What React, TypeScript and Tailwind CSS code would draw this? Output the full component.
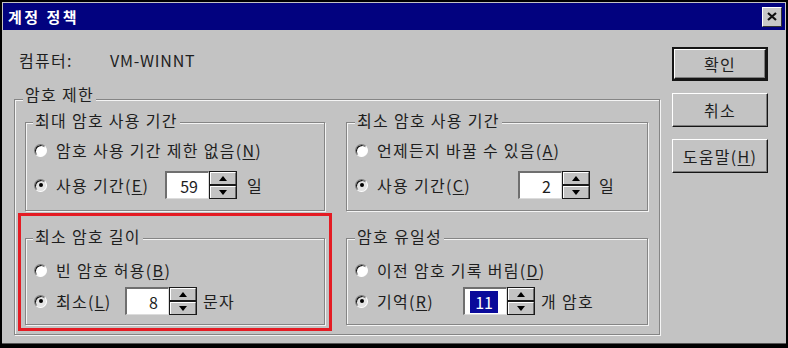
import React from "react";

function Radio({ checked }: { checked?: boolean }) {
  return (
    <div
      className={`relative w-[13px] h-[13px] shrink-0 rounded-full border border-t-[#7a7a7a] border-l-[#7a7a7a] border-r-white border-b-white shadow-[inset_1px_1px_0_#111] ${
        checked ? "bg-[#e4e4e4]" : "bg-white"
      } flex items-center justify-center`}
    >
      {checked && <div className="w-[4px] h-[4px] rounded-full bg-black" />}
    </div>
  );
}

function U({ children }: { children: React.ReactNode }) {
  return <span className="underline underline-offset-2">{children}</span>;
}

function Spinner() {
  return (
    <div className="w-[28px] h-[28px] shrink-0 flex flex-col border border-[#1a1a1a] bg-[#1a1a1a]">
      <div className="flex-1 bg-[#c3c3c3] border-t border-l border-white border-r border-r-[#6a6a6a] flex items-center justify-center mb-[2px]">
        <svg width="8" height="5" viewBox="0 0 8 5">
          <polygon points="4,0 8,5 0,5" fill="#000" />
        </svg>
      </div>
      <div className="flex-1 bg-[#c3c3c3] border-t border-l border-white border-r border-r-[#6a6a6a] flex items-center justify-center">
        <svg width="8" height="5" viewBox="0 0 8 5">
          <polygon points="0,0 8,0 4,5" fill="#000" />
        </svg>
      </div>
    </div>
  );
}

function Edit({ value, selected }: { value: string; selected?: boolean }) {
  return (
    <div className="w-[44px] h-[28px] shrink-0 bg-white border-t-2 border-l-2 border-t-[#6f6f6f] border-l-[#6f6f6f] border-b border-r border-b-[#dcdcdc] border-r-[#dcdcdc] flex items-center justify-end pr-[10px] tracking-normal">
      {selected ? (
        <span className="bg-[#0a0a9a] text-white px-[5px] h-[22px] flex items-center mr-[-2px]">{value}</span>
      ) : (
        <span>{value}</span>
      )}
    </div>
  );
}

function Group({
  label,
  labelClass,
  className,
  children,
}: {
  label: string;
  labelClass: string;
  className?: string;
  children?: React.ReactNode;
}) {
  return (
    <div
      className={`relative border border-[#858585] shadow-[inset_1px_1px_0_#f4f4f4,1px_1px_0_#f4f4f4] ${className ?? ""}`}
    >
      <span className={`absolute bg-[#c3c3c3] px-[2px] leading-[18px] ${labelClass}`}>{label}</span>
      {children}
    </div>
  );
}

function Btn({ children, def }: { children: React.ReactNode; def?: boolean }) {
  const inner = (
    <div className="h-full w-full bg-[#c3c3c3] border-t border-l border-t-white border-l-white border-b border-r border-b-[#151515] border-r-[#151515] shadow-[inset_-1px_-1px_0_#7d7d7d] flex items-center justify-center">
      {children}
    </div>
  );
  if (def) {
    return <div className="h-[34px] w-[96px] border-2 border-[#151515]">{inner}</div>;
  }
  return <div className="h-[34px] w-[96px]">{inner}</div>;
}

export default function App() {
  return (
    <div className="w-[788px] h-[348px] bg-black pt-[2px] px-[2px] pb-[4px] font-['Noto_Sans_CJK_KR','Noto_Sans',sans-serif] text-[16px] leading-none text-[#1e1e1e] tracking-[1.3px]">
      <div className="h-full bg-[#c3c3c3] pt-[1px] px-[1px] flex flex-col border-b border-[#555]">
        {/* Title bar */}
        <div className="h-[27px] shrink-0 bg-[#02027f] flex items-center justify-between pl-[5px] pr-[3px]">
          <span className="text-white font-bold text-[15px] tracking-[2.5px]">계정 정책</span>
          <div className="w-[20px] h-[20px] bg-[#c8c8c8] border-t border-l border-white border-b border-r border-b-[#333] border-r-[#333] flex items-center justify-center">
            <svg width="10" height="9" viewBox="0 0 10 9">
              <path d="M1 1 L9 8 M9 1 L1 8" stroke="#111" strokeWidth="2.2" />
            </svg>
          </div>
        </div>

        {/* Body */}
        <div className="flex flex-1">
          <div className="w-[657px] pl-[11px]">
            <div className="mt-[20px] h-[20px] pl-[5px] flex items-center">
              <span className="w-[91px]">컴퓨터:</span>
              <span className="tracking-[0.8px]">VM-WINNT</span>
            </div>

            <Group
              label="암호 제한"
              labelClass="-top-[15px] left-[8px]"
              className="mt-[29px] w-[646px] h-[236px] pt-[22px] pl-[10px]"
            >
              <div className="grid grid-cols-[300px_302px] grid-rows-[89px_87px] gap-x-[21px] gap-y-[27px]">
                {/* 최대 암호 사용 기간 */}
                <Group label="최대 암호 사용 기간" labelClass="-top-[12px] left-[7px]" className="pt-[16px] pl-[8px]">
                  <div className="flex items-center h-[22px]">
                    <Radio />
                    <span className="ml-[9px]">
                      암호 사용 기간 제한 없음(<U>N</U>)
                    </span>
                  </div>
                  <div className="flex items-center h-[28px] mt-[10px]">
                    <Radio checked />
                    <span className="ml-[9px] w-[109px]">
                      사용 기간(<U>E</U>)
                    </span>
                    <Edit value="59" />
                    <Spinner />
                    <span className="ml-[10px]">일</span>
                  </div>
                </Group>

                {/* 최소 암호 사용 기간 */}
                <Group label="최소 암호 사용 기간" labelClass="-top-[12px] left-[8px]" className="pt-[16px] pl-[8px]">
                  <div className="flex items-center h-[22px]">
                    <Radio />
                    <span className="ml-[9px]">
                      언제든지 바꿀 수 있음(<U>A</U>)
                    </span>
                  </div>
                  <div className="flex items-center h-[28px] mt-[10px]">
                    <Radio checked />
                    <span className="ml-[9px] w-[141px]">
                      사용 기간(<U>C</U>)
                    </span>
                    <Edit value="2" />
                    <Spinner />
                    <span className="ml-[9px]">일</span>
                  </div>
                </Group>

                {/* 최소 암호 길이 (red box) */}
                <div className="relative">
                  <Group label="최소 암호 길이" labelClass="-top-[12px] left-[7px]" className="h-full pt-[20px] pl-[8px]">
                    <div className="flex items-center h-[22px]">
                      <Radio />
                      <span className="ml-[9px]">
                        빈 암호 허용(<U>B</U>)
                      </span>
                    </div>
                    <div className="flex items-center h-[28px] mt-[6px]">
                      <Radio checked />
                      <span className="ml-[9px] w-[69px]">
                        최소(<U>L</U>)
                      </span>
                      <Edit value="8" />
                      <Spinner />
                      <span className="ml-[6px]">문자</span>
                    </div>
                  </Group>
                  <div className="absolute -left-[7px] -right-[7px] -top-[25px] -bottom-[6px] border-[3px] border-[#e41b23] pointer-events-none" />
                </div>

                {/* 암호 유일성 */}
                <Group label="암호 유일성" labelClass="-top-[12px] left-[8px]" className="h-full pt-[20px] pl-[8px]">
                  <div className="flex items-center h-[22px]">
                    <Radio />
                    <span className="ml-[9px]">
                      이전 암호 기록 버림(<U>D</U>)
                    </span>
                  </div>
                  <div className="flex items-center h-[28px] mt-[6px]">
                    <Radio checked />
                    <span className="ml-[9px] w-[86px]">
                      기억(<U>R</U>)
                    </span>
                    <Edit value="11" selected />
                    <Spinner />
                    <span className="ml-[6px]">개 암호</span>
                  </div>
                </Group>
              </div>
            </Group>
          </div>

          {/* Buttons */}
          <div className="ml-[12px] w-[96px] pt-[17px] flex flex-col gap-[12px]">
            <Btn def>확인</Btn>
            <Btn>취소</Btn>
            <Btn>
              도움말(<U>H</U>)
            </Btn>
          </div>
        </div>
      </div>
    </div>
  );
}
